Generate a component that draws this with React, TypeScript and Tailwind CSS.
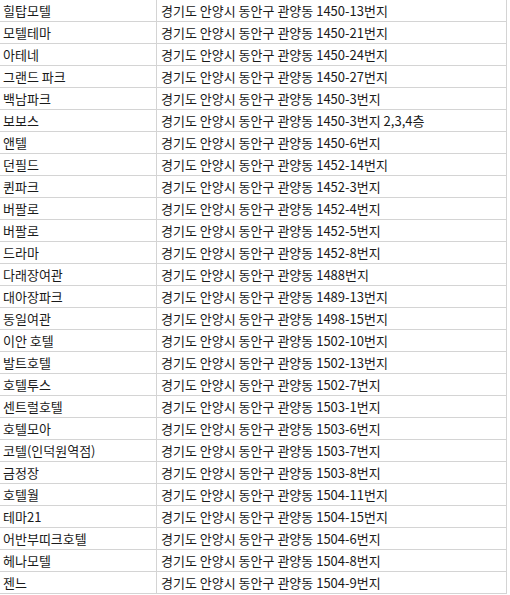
const rows: [string, string][] = [
  ["힐탑모텔", "경기도 안양시 동안구 관양동 1450-13번지"],
  ["모텔테마", "경기도 안양시 동안구 관양동 1450-21번지"],
  ["아테네", "경기도 안양시 동안구 관양동 1450-24번지"],
  ["그랜드 파크", "경기도 안양시 동안구 관양동 1450-27번지"],
  ["백남파크", "경기도 안양시 동안구 관양동 1450-3번지"],
  ["보보스", "경기도 안양시 동안구 관양동 1450-3번지 2,3,4층"],
  ["앤텔", "경기도 안양시 동안구 관양동 1450-6번지"],
  ["던필드", "경기도 안양시 동안구 관양동 1452-14번지"],
  ["퀸파크", "경기도 안양시 동안구 관양동 1452-3번지"],
  ["버팔로", "경기도 안양시 동안구 관양동 1452-4번지"],
  ["버팔로", "경기도 안양시 동안구 관양동 1452-5번지"],
  ["드라마", "경기도 안양시 동안구 관양동 1452-8번지"],
  ["다래장여관", "경기도 안양시 동안구 관양동 1488번지"],
  ["대아장파크", "경기도 안양시 동안구 관양동 1489-13번지"],
  ["동일여관", "경기도 안양시 동안구 관양동 1498-15번지"],
  ["이안 호텔", "경기도 안양시 동안구 관양동 1502-10번지"],
  ["발트호텔", "경기도 안양시 동안구 관양동 1502-13번지"],
  ["호텔투스", "경기도 안양시 동안구 관양동 1502-7번지"],
  ["센트럴호텔", "경기도 안양시 동안구 관양동 1503-1번지"],
  ["호텔모아", "경기도 안양시 동안구 관양동 1503-6번지"],
  ["코텔(인덕원역점)", "경기도 안양시 동안구 관양동 1503-7번지"],
  ["금정장", "경기도 안양시 동안구 관양동 1503-8번지"],
  ["호텔월", "경기도 안양시 동안구 관양동 1504-11번지"],
  ["테마21", "경기도 안양시 동안구 관양동 1504-15번지"],
  ["어반부띠크호텔", "경기도 안양시 동안구 관양동 1504-6번지"],
  ["헤나모텔", "경기도 안양시 동안구 관양동 1504-8번지"],
  ["젠느", "경기도 안양시 동안구 관양동 1504-9번지"],
];

export default function App() {
  return (
    <div className="w-[510px] h-[595px] bg-white overflow-hidden font-['Noto_Sans_CJK_KR',sans-serif] text-[13px] text-[#1a1a1a]">
      <div className="w-[507px] border-r border-[#d4d4d4]">
        {rows.map(([name, addr], i) => (
          <div key={i} className="flex h-[22px] border-b border-[#d4d4d4]">
            <div className="w-[157px] shrink-0 border-r border-[#d4d4d4] pl-[3px] leading-[21px] whitespace-nowrap">
              {name}
            </div>
            <div className="flex-1 pl-[4px] leading-[21px] whitespace-nowrap">{addr}</div>
          </div>
        ))}
      </div>
    </div>
  );
}
